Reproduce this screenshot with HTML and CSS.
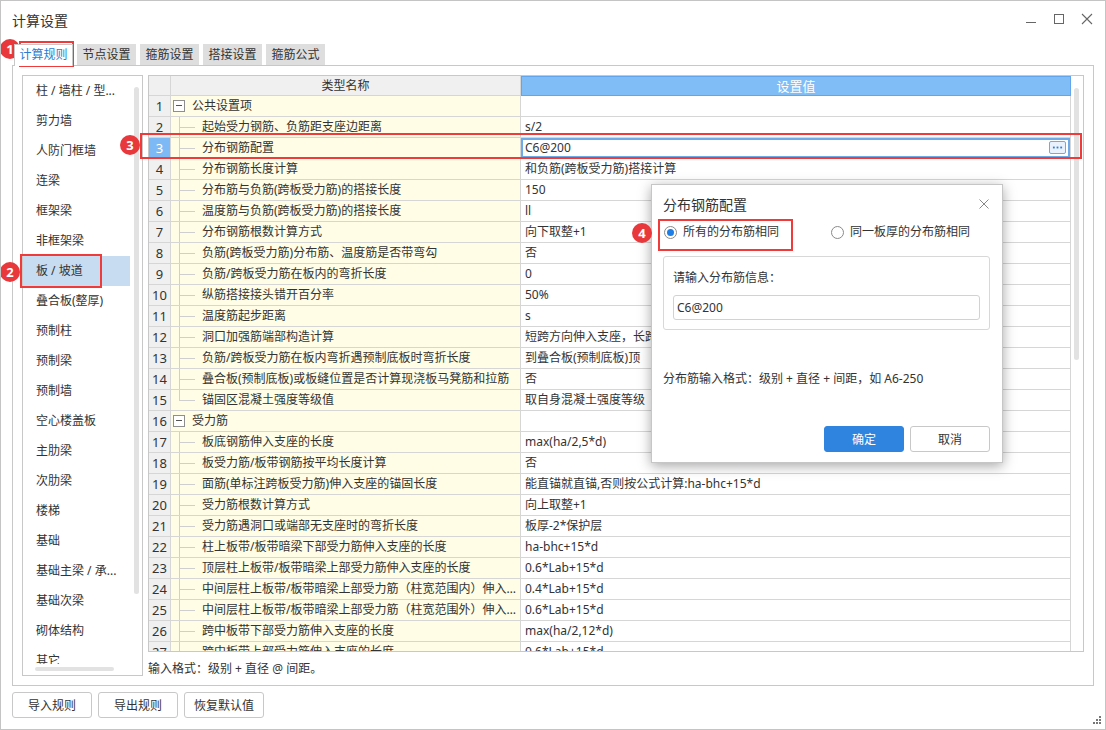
FILE: index.html
```html
<!DOCTYPE html>
<html lang="zh-CN">
<head>
<meta charset="utf-8">
<title>计算设置</title>
<link rel="stylesheet" href="styles.css">
</head>
<body>
<div class="window">
  <div class="titlebar">
    <span class="title">计算设置</span>
    <div class="controls">
      <svg viewBox="0 0 12 12"><line x1="1" y1="9.5" x2="11" y2="9.5" stroke="#666" stroke-width="1"/></svg>
      <svg viewBox="0 0 12 12"><rect x="1.5" y="1.5" width="9" height="9" fill="none" stroke="#666" stroke-width="1"/></svg>
      <svg viewBox="0 0 12 12"><path d="M1 1 L11 11 M11 1 L1 11" stroke="#666" stroke-width="1.1"/></svg>
    </div>
  </div>

  <div class="tabs">
    <div class="tab active">计算规则</div>
    <div class="tab">节点设置</div>
    <div class="tab">箍筋设置</div>
    <div class="tab">搭接设置</div>
    <div class="tab">箍筋公式</div>
  </div>

  <div class="panel">
    <div class="sidebar">
      <div class="side-body">
        <div class="items">
          <div class="item">柱 / 墙柱 / 型...</div>
          <div class="item">剪力墙</div>
          <div class="item">人防门框墙</div>
          <div class="item">连梁</div>
          <div class="item">框架梁</div>
          <div class="item">非框架梁</div>
          <div class="item sel">板 / 坡道</div>
          <div class="item">叠合板(整厚)</div>
          <div class="item">预制柱</div>
          <div class="item">预制梁</div>
          <div class="item">预制墙</div>
          <div class="item">空心楼盖板</div>
          <div class="item">主肋梁</div>
          <div class="item">次肋梁</div>
          <div class="item">楼梯</div>
          <div class="item">基础</div>
          <div class="item">基础主梁 / 承...</div>
          <div class="item">基础次梁</div>
          <div class="item">砌体结构</div>
          <div class="item">其它</div>
        </div>
        <div class="vscroll"><div class="vthumb"></div></div>
      </div>
      <div class="hscroll"><div class="hthumb"></div></div>
    </div>

    <div class="main">
      <div class="grid-wrap">
        <div class="grid">
          <div class="row head">
            <div class="cell num"></div>
            <div class="cell hname">类型名称</div>
            <div class="cell hval">设置值</div>
          </div>
          <div class="row"><div class="cell num">1</div><div class="cell name group"><span class="toggle"></span>公共设置项</div><div class="cell val"></div></div>
          <div class="row"><div class="cell num">2</div><div class="cell name child">起始受力钢筋、负筋距支座边距离</div><div class="cell val">s/2</div></div>
          <div class="row"><div class="cell num sel">3</div><div class="cell name child">分布钢筋配置</div><div class="cell val edit">C6@200<span class="more"><svg viewBox="0 0 16 12"><rect x="3" y="5" width="2" height="2" fill="#2f7fd8"/><rect x="7" y="5" width="2" height="2" fill="#2f7fd8"/><rect x="11" y="5" width="2" height="2" fill="#2f7fd8"/></svg></span></div></div>
          <div class="row"><div class="cell num">4</div><div class="cell name child">分布钢筋长度计算</div><div class="cell val">和负筋(跨板受力筋)搭接计算</div></div>
          <div class="row"><div class="cell num">5</div><div class="cell name child">分布筋与负筋(跨板受力筋)的搭接长度</div><div class="cell val">150</div></div>
          <div class="row"><div class="cell num">6</div><div class="cell name child">温度筋与负筋(跨板受力筋)的搭接长度</div><div class="cell val">ll</div></div>
          <div class="row"><div class="cell num">7</div><div class="cell name child">分布钢筋根数计算方式</div><div class="cell val">向下取整+1</div></div>
          <div class="row"><div class="cell num">8</div><div class="cell name child">负筋(跨板受力筋)分布筋、温度筋是否带弯勾</div><div class="cell val">否</div></div>
          <div class="row"><div class="cell num">9</div><div class="cell name child">负筋/跨板受力筋在板内的弯折长度</div><div class="cell val">0</div></div>
          <div class="row"><div class="cell num">10</div><div class="cell name child">纵筋搭接接头错开百分率</div><div class="cell val">50%</div></div>
          <div class="row"><div class="cell num">11</div><div class="cell name child">温度筋起步距离</div><div class="cell val">s</div></div>
          <div class="row"><div class="cell num">12</div><div class="cell name child">洞口加强筋端部构造计算</div><div class="cell val">短跨方向伸入支座，长跨方向按锚固计算</div></div>
          <div class="row"><div class="cell num">13</div><div class="cell name child">负筋/跨板受力筋在板内弯折遇预制底板时弯折长度</div><div class="cell val">到叠合板(预制底板)顶</div></div>
          <div class="row"><div class="cell num">14</div><div class="cell name child">叠合板(预制底板)或板缝位置是否计算现浇板马凳筋和拉筋</div><div class="cell val">否</div></div>
          <div class="row"><div class="cell num">15</div><div class="cell name child last">锚固区混凝土强度等级值</div><div class="cell val">取自身混凝土强度等级</div></div>
          <div class="row"><div class="cell num">16</div><div class="cell name group"><span class="toggle"></span>受力筋</div><div class="cell val"></div></div>
          <div class="row"><div class="cell num">17</div><div class="cell name child">板底钢筋伸入支座的长度</div><div class="cell val">max(ha/2,5*d)</div></div>
          <div class="row"><div class="cell num">18</div><div class="cell name child">板受力筋/板带钢筋按平均长度计算</div><div class="cell val">否</div></div>
          <div class="row"><div class="cell num">19</div><div class="cell name child">面筋(单标注跨板受力筋)伸入支座的锚固长度</div><div class="cell val">能直锚就直锚,否则按公式计算:ha-bhc+15*d</div></div>
          <div class="row"><div class="cell num">20</div><div class="cell name child">受力筋根数计算方式</div><div class="cell val">向上取整+1</div></div>
          <div class="row"><div class="cell num">21</div><div class="cell name child">受力筋遇洞口或端部无支座时的弯折长度</div><div class="cell val">板厚-2*保护层</div></div>
          <div class="row"><div class="cell num">22</div><div class="cell name child">柱上板带/板带暗梁下部受力筋伸入支座的长度</div><div class="cell val">ha-bhc+15*d</div></div>
          <div class="row"><div class="cell num">23</div><div class="cell name child">顶层柱上板带/板带暗梁上部受力筋伸入支座的长度</div><div class="cell val">0.6*Lab+15*d</div></div>
          <div class="row"><div class="cell num">24</div><div class="cell name child">中间层柱上板带/板带暗梁上部受力筋（柱宽范围内）伸入支座的长度</div><div class="cell val">0.4*Lab+15*d</div></div>
          <div class="row"><div class="cell num">25</div><div class="cell name child">中间层柱上板带/板带暗梁上部受力筋（柱宽范围外）伸入支座的长度</div><div class="cell val">0.6*Lab+15*d</div></div>
          <div class="row"><div class="cell num">26</div><div class="cell name child">跨中板带下部受力筋伸入支座的长度</div><div class="cell val">max(ha/2,12*d)</div></div>
          <div class="row"><div class="cell num">27</div><div class="cell name child">跨中板带上部受力筋伸入支座的长度</div><div class="cell val">0.6*Lab+15*d</div></div>
        </div>
        <div class="gscroll"><div class="gthumb"></div></div>
      </div>
      <div class="hint">输入格式：级别 + 直径 @ 间距。</div>
    </div>
  </div>

  <div class="footer">
    <button class="btn">导入规则</button>
    <button class="btn">导出规则</button>
    <button class="btn">恢复默认值</button>
  </div>

  <svg class="grip" viewBox="0 0 10 9"><rect x="7" y="0" width="2" height="2" fill="#777"/><rect x="4" y="3" width="2" height="2" fill="#777"/><rect x="7" y="3" width="2" height="2" fill="#777"/><rect x="1" y="6" width="2" height="2" fill="#777"/><rect x="4" y="6" width="2" height="2" fill="#777"/><rect x="7" y="6" width="2" height="2" fill="#777"/></svg>

  <div class="dialog">
    <div class="dlg-title">
      <span>分布钢筋配置</span>
      <svg class="dlg-close" viewBox="0 0 10 10"><path d="M0.5 0.5 L9.5 9.5 M9.5 0.5 L0.5 9.5" stroke="#888" stroke-width="1"/></svg>
    </div>
    <div class="radios">
      <div class="opt first"><span class="radio on"></span><span>所有的分布筋相同</span></div>
      <div class="opt"><span class="radio"></span><span>同一板厚的分布筋相同</span></div>
    </div>
    <div class="groupbox">
      <div class="glabel">请输入分布筋信息：</div>
      <div class="input">C6@200</div>
    </div>
    <div class="fmt">分布筋输入格式：级别 + 直径 + 间距，如 A6-250</div>
    <div class="dlg-btns">
      <button class="dbtn ok">确定</button>
      <button class="dbtn">取消</button>
    </div>
  </div>

  <div class="mark m1"></div>
  <div class="mark m2"></div>
  <div class="mark m3"></div>
  <div class="mark m4"></div>
  <div class="badge b1">1</div>
  <div class="badge b2">2</div>
  <div class="badge b3">3</div>
  <div class="badge b4">4</div>
</div>
</body>
</html>
```

FILE: styles.css
```css
* { box-sizing: border-box; }
html, body { margin: 0; padding: 0; background: #fff; }
body {
  font-family: "Noto Sans", "Noto Sans CJK SC", sans-serif;
  font-size: 12px;
  color: #333;
}
.window {
  position: relative;
  width: 1106px;
  height: 730px;
  border: 1px solid #c4c4c4;
  background: #fff;
  overflow: hidden;
}
.titlebar {
  display: flex;
  justify-content: space-between;
  height: 43px;
  padding: 10px 12px 0 11px;
}
.title { font-size: 14px; line-height: 20px; color: #333; }
.controls { display: flex; gap: 16px; padding-top: 2px; }
.controls svg { width: 12px; height: 12px; display: block; }

.tabs {
  display: flex;
  gap: 4px;
  padding-left: 13px;
  height: 21px;
  position: relative;
  z-index: 1;
}
.tab {
  width: 59px;
  height: 21px;
  line-height: 21px;
  text-align: center;
  background: #dedede;
  color: #333;
}
.tab.active {
  background: #fff;
  color: #2b7cd3;
  height: 22px;
  line-height: 20px;
  border: 1px solid #c8c8c8;
  border-bottom: none;
}

.panel {
  display: flex;
  gap: 5px;
  width: 1082px;
  height: 621px;
  margin-left: 11px;
  padding: 9px;
  border: 1px solid #c8c8c8;
}
.sidebar {
  width: 121px;
  height: 601px;
  border: 1px solid #c8c8c8;
  display: flex;
  flex-direction: column;
}
.side-body { flex: 1; display: flex; overflow: hidden; }
.items { flex: 1; overflow: hidden; }
.item {
  height: 30px;
  line-height: 30px;
  padding-left: 13px;
  white-space: nowrap;
  color: #333;
}
.item.sel { background: #c8dcf1; }
.vscroll { width: 12px; }
.vthumb {
  margin: 11px 0 0 4px;
  width: 5px;
  height: 507px;
  background: #e2e2e2;
  border-radius: 3px;
}
.hscroll { height: 11px; }
.hthumb {
  margin: 3px 0 0 12px;
  width: 79px;
  height: 4px;
  background: #e2e2e2;
  border-radius: 2px;
}

.main { width: 936px; display: flex; flex-direction: column; }
.grid-wrap {
  height: 577px;
  border: 1px solid #c8c8c8;
  display: flex;
}
.grid { width: 922px; overflow: hidden; }
.row {
  display: grid;
  grid-template-columns: 22px 350px 550px;
  height: 21px;
}
.row.head { height: 20px; }
.cell {
  border-right: 1px solid #d6d6d6;
  border-bottom: 1px solid #d6d6d6;
  line-height: 20px;
  white-space: nowrap;
  overflow: hidden;
}
.head .cell { line-height: 19px; }
.num {
  background: #f0f0f0;
  text-align: center;
  font-size: 13px;
}
.num.sel { background: #7db9f4; color: #fff; }
.hname { background: #f0f0f0; text-align: center; }
.hval {
  background: #80bcf6;
  color: #fff;
  text-align: center;
  font-size: 13px;
  border: 1px solid #62a5ec;
}
.name {
  position: relative;
  background: #fffde6;
  padding-left: 31px;
  text-overflow: ellipsis;
}
.name.child::before {
  content: "";
  position: absolute;
  left: 8px;
  top: 0;
  bottom: -1px;
  border-left: 1px solid #cfcfcf;
}
.name.last::before { bottom: 10px; }
.name.child::after {
  content: "";
  position: absolute;
  left: 8px;
  top: 10px;
  width: 16px;
  border-top: 1px solid #cfcfcf;
}
.name.group { padding-left: 2px; }
.toggle {
  display: inline-block;
  vertical-align: middle;
  position: relative;
  width: 12px;
  height: 12px;
  border: 1px solid #8e8e8e;
  background: #fff;
  margin: -2px 7px 0 0;
}
.toggle::after {
  content: "";
  position: absolute;
  left: 2px;
  right: 2px;
  top: 4px;
  border-top: 1px solid #555;
}
.val { background: #fff; padding-left: 4px; }
.val.edit {
  position: relative;
  box-shadow: inset 0 0 0 2px #6ea9e8;
}
.more {
  position: absolute;
  right: 4px;
  top: 3px;
  width: 17px;
  height: 13px;
  border: 1px solid #6ea9e8;
  border-radius: 2px;
  background: #eaf1fb;
}
.more svg { display: block; width: 15px; height: 11px; }
.gscroll { width: 12px; }
.gthumb {
  margin: 12px 0 0 3px;
  width: 5px;
  height: 272px;
  background: #e2e2e2;
  border-radius: 3px;
}
.hint { margin-top: 9px; line-height: 16px; color: #333; }

.footer {
  display: flex;
  gap: 6px;
  margin: 6px 0 0 11px;
}
.btn {
  width: 80px;
  height: 26px;
  background: #fff;
  border: 1px solid #c8c8c8;
  border-radius: 3px;
  font-family: inherit;
  font-size: 12px;
  color: #333;
  padding: 0;
}
.grip {
  position: absolute;
  right: 3px;
  bottom: 4px;
  width: 10px;
  height: 9px;
}

.dialog {
  position: absolute;
  left: 650px;
  top: 183px;
  width: 352px;
  height: 279px;
  background: #fff;
  border: 1px solid #c6c6c6;
  box-shadow: 0 3px 12px rgba(0, 0, 0, 0.35);
}
.dlg-title {
  display: flex;
  justify-content: space-between;
  align-items: flex-start;
  height: 35px;
  padding: 12px 13px 0 11px;
  font-size: 14px;
  line-height: 16px;
  color: #333;
}
.dlg-close { width: 10px; height: 10px; margin-top: 2px; }
.radios {
  display: flex;
  align-items: center;
  height: 24px;
  padding-left: 12px;
}
.opt { display: flex; align-items: center; gap: 6px; line-height: 16px; }
.opt.first { width: 167px; }
.radio {
  position: relative;
  width: 13px;
  height: 13px;
  border: 1px solid #8a8a8a;
  border-radius: 50%;
  background: #fff;
}
.radio.on::after {
  content: "";
  position: absolute;
  left: 2px;
  top: 2px;
  width: 7px;
  height: 7px;
  border-radius: 50%;
  background: #1f7ee6;
}
.groupbox {
  margin: 12px 0 0 11px;
  width: 327px;
  height: 74px;
  border: 1px solid #d8d8d8;
  border-radius: 3px;
  padding: 13px 9px 0 9px;
}
.glabel { line-height: 16px; }
.input {
  margin-top: 9px;
  height: 25px;
  border: 1px solid #d2d2d2;
  border-radius: 3px;
  padding-left: 3px;
  line-height: 23px;
}
.fmt { margin: 41px 0 0 11px; line-height: 16px; }
.dlg-btns {
  display: flex;
  justify-content: flex-end;
  gap: 6px;
  margin-top: 39px;
  padding-right: 12px;
}
.dbtn {
  width: 80px;
  height: 26px;
  border: 1px solid #c8c8c8;
  border-radius: 3px;
  background: #fff;
  font-family: inherit;
  font-size: 12px;
  color: #333;
  padding: 0;
}
.dbtn.ok { background: #2f84e0; border-color: #2f84e0; color: #fff; }

.mark {
  position: absolute;
  border: 2px solid #f03b3b;
}
.m1 { left: 18px; top: 40px; width: 55px; height: 26px; }
.m2 { left: 19px; top: 253px; width: 82px; height: 34px; }
.m3 { left: 139px; top: 132px; width: 942px; height: 26px; }
.m4 { left: 657px; top: 218px; width: 135px; height: 32px; }
.badge {
  position: absolute;
  width: 20px;
  height: 20px;
  border-radius: 50%;
  background: #e8383b;
  color: #fff;
  font-weight: bold;
  font-size: 13px;
  line-height: 20px;
  text-align: center;
}
.b1 { left: -1px; top: 38px; }
.b2 { left: -1px; top: 261px; }
.b3 { left: 119px; top: 134px; }
.b4 { left: 631px; top: 222px; }
```
